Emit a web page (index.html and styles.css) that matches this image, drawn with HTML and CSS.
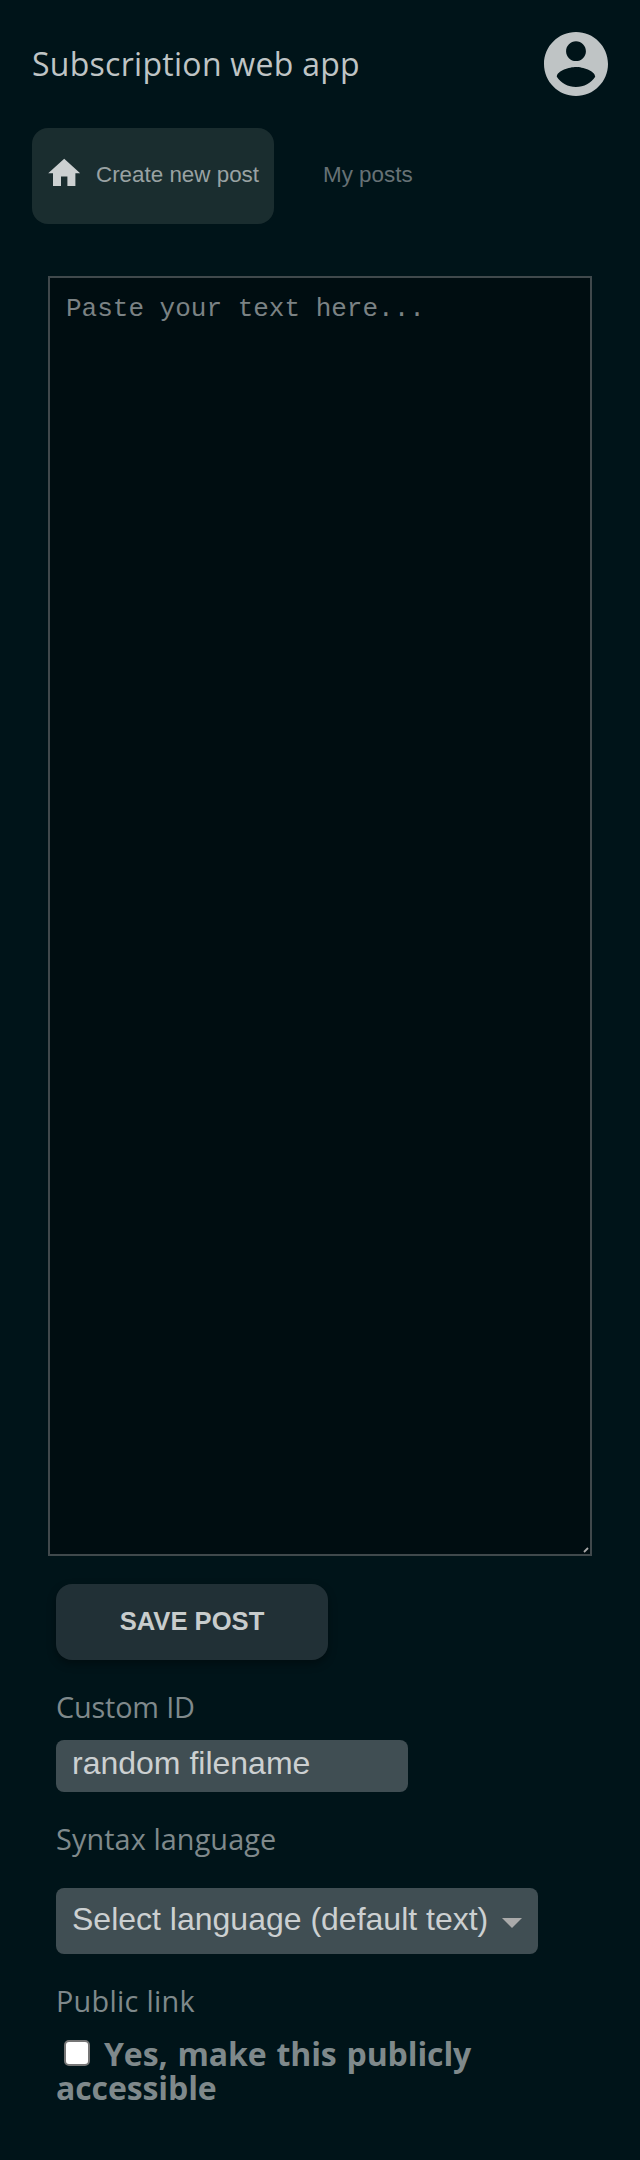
FILE: index.html
```html
<!DOCTYPE html>
<html lang="en">
<head>
<meta charset="utf-8">
<title>Subscription web app</title>
<link rel="stylesheet" href="styles.css">
</head>
<body>
<header class="header">
  <h1 class="title">Subscription web app</h1>
  <svg class="avatar" viewBox="2 2 20 20" aria-label="Account"><path d="M12 2C6.480 2 2 6.480 2 12s4.480 10 10 10 10-4.480 10-10S17.520 2 12 2zm0 2.900c1.710 0 3.100 1.390 3.100 3.100s-1.390 3.100-3.100 3.100-3.100-1.390-3.100-3.100 1.390-3.100 3.100-3.100zm0 14.300c-2.500 0-4.710-1.280-6-3.220.03-1.990 4-3.080 6-3.080 1.990 0 5.970 1.090 6 3.080-1.290 1.940-3.500 3.220-6 3.220z"/></svg>
</header>
<nav class="tabs">
  <a class="tab tab-active"><svg class="home" viewBox="0 0 24 24"><path d="M10 20v-6h4v6h5v-8h3L12 3 2 12h3v8z"/></svg><span>Create new post</span></a>
  <a class="tab">My posts</a>
</nav>
<main class="main">
  <div class="editor">
    <textarea class="text" placeholder="Paste your text here..."></textarea>
    <svg class="grip" viewBox="0 0 6 6"><path d="M1 5L5 1"/></svg>
  </div>
  <form class="form">
    <button class="save" type="button">SAVE POST</button>
    <label class="label label-id" for="id">Custom ID</label>
    <input class="field" id="id" type="text" placeholder="random filename">
    <label class="label label-lang">Syntax language</label>
    <div class="select"><span>Select language (default text)</span><svg class="caret" viewBox="0 0 20 10"><path d="M0 0h20L10 10z"/></svg></div>
    <div class="label label-link">Public link</div>
    <label class="public"><input class="check" type="checkbox">Yes, make this publicly accessible</label>
  </form>
</main>
</body>
</html>
```
FILE: styles.css
```css
* { box-sizing: border-box; }
body {
  margin: 0;
  min-height: 2160px;
  background: #001419;
  font-family: "Open Sans", sans-serif;
  color: #bfc4c5;
}
.header {
  display: flex;
  align-items: center;
  justify-content: space-between;
  height: 128px;
  padding: 0 32px;
}
.title { margin: 0; font-size: 32px; font-weight: 400; line-height: 46px; letter-spacing: .28px; }
.avatar { width: 64px; height: 64px; fill: #bfc4c5; }
.tabs {
  display: flex;
  height: 96px;
  padding-left: 32px;
  gap: 33px;
  font-family: "Liberation Sans", sans-serif;
  font-size: 22.4px;
}
.tab {
  display: flex;
  align-items: center;
  padding: 0 16px 2px;
  border-radius: 16px;
  color: #667175;
}
.tab-active { width: 242px; padding: 0 0 2px 13px; background: #1a2d2f; color: #99a2a3; }
.home { width: 38.4px; height: 38.4px; margin: -4px 12.6px 0 0; fill: #ccd0d1; }
.main { padding: 52px 48px 0; }
.editor { position: relative; height: 1280px; }
.text {
  display: block;
  width: 100%;
  height: 100%;
  padding: 16px;
  border: 2px solid #40494c;
  background: #000d11;
  color: #bfc4c5;
  font: 26px/30px "Liberation Mono", monospace;
  resize: none;
  outline: none;
}
.text::placeholder { color: #7b8284; }
.grip { position: absolute; right: 3px; bottom: 3px; width: 6px; height: 6px; stroke: #aaa; stroke-width: 1.8; }
.form { display: flex; flex-direction: column; align-items: flex-start; padding: 28px 8px 0; }
.save {
  width: 272px;
  height: 76px;
  padding: 0 0 2px;
  border: 0;
  border-radius: 16px;
  background: #213036;
  box-shadow: 0 4px 8px rgba(0, 0, 0, .35);
  color: #c8cccd;
  font: bold 25.6px "Liberation Sans", sans-serif;
}
.label { font-size: 28.8px; font-weight: 400; line-height: 38px; color: #7f898b; }
.label-id { margin-top: 28px; letter-spacing: -.15px; }
.field {
  width: 352px;
  height: 52px;
  margin-top: 14px;
  padding: 0 16px 6px;
  border: 0;
  border-radius: 8px;
  background: #404e53;
  font: 32px "Liberation Sans", sans-serif;
}
.field::placeholder { color: #ccd0d1; }
.label-lang { margin-top: 28px; letter-spacing: .1px; }
.select {
  display: flex;
  align-items: center;
  justify-content: space-between;
  width: 482px;
  height: 66px;
  margin-top: 30px;
  padding: 0 16px 4px;
  border-radius: 8px;
  background: #404e53;
  color: #ccd0d1;
  font: 32px "Liberation Sans", sans-serif;
  white-space: nowrap;
}
.caret { width: 20px; height: 10px; margin-top: 8px; fill: #aaa; }
.label-link { margin-top: 28px; letter-spacing: .28px; }
.public {
  margin-top: 17px;
  font-size: 32px;
  font-weight: 700;
  line-height: 34px;
  letter-spacing: -.1px;
  word-spacing: 1.7px;
  color: #7f898b;
}
.check {
  appearance: none;
  width: 26px;
  height: 26px;
  margin: 0 14px 0 8px;
  border: 2px solid #767676;
  border-radius: 5px;
  background: #fff;
}
```
